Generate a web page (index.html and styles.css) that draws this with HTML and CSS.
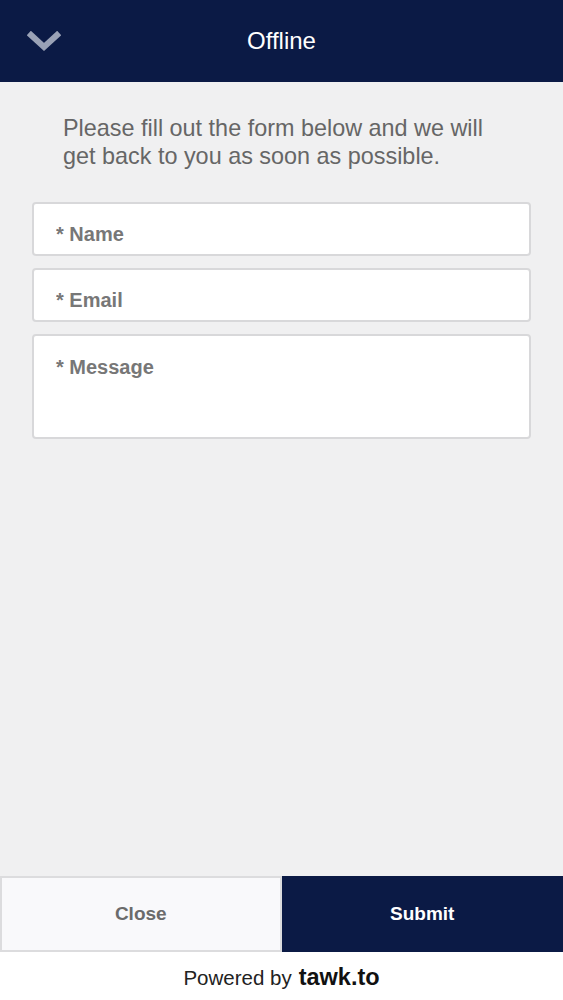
FILE: index.html
```html
<!DOCTYPE html>
<html lang="en">
<head>
  <meta charset="UTF-8" />
  <title>Offline</title>
  <link rel="stylesheet" href="styles.css">
</head>
<body>
  <div class="widget">
    <header>
      <button class="minimize" aria-label="Minimize">
        <svg width="34" height="22" viewBox="0 0 34 22"><path d="M4 4 L17 16 L30 4" fill="none" stroke="#9aa2b6" stroke-width="6" stroke-linecap="square"/></svg>
      </button>
      <h1>Offline</h1>
    </header>

    <main class="content">
      <p class="intro">Please fill out the form below and we will get back to you as soon as possible.</p>
      <form class="form">
        <input type="text" placeholder="* Name" />
        <input type="email" placeholder="* Email" />
        <textarea placeholder="* Message"></textarea>
      </form>
    </main>

    <div class="actions">
      <button class="close">Close</button>
      <button class="submit">Submit</button>
    </div>

    <footer>Powered by <strong>tawk.to</strong></footer>
  </div>
</body>
</html>
```

FILE: styles.css
```css
body {
  font-family: 'Liberation Sans', Arial, sans-serif;
  margin: 0;
  background: #f0f0f1;
}
.widget {
  display: flex;
  flex-direction: column;
  height: 100vh;
}
header {
  background: #0b1a45;
  height: 82px;
  display: flex;
  align-items: center;
  justify-content: center;
  position: relative;
}
header h1 {
  margin: 0;
  color: white;
  font-size: 24px;
  font-weight: normal;
}
.minimize {
  position: absolute;
  left: 27px;
  top: 31px;
  background: none;
  border: none;
  padding: 0;
  line-height: 0;
}
.content {
  flex: 1;
  padding: 0 32px;
}
.intro {
  margin: 32px 0 32px 31px;
  max-width: 440px;
  font-size: 23.4px;
  line-height: 28px;
  color: #666;
}
.form {
  display: flex;
  flex-direction: column;
  gap: 12px;
}
.form input,
.form textarea {
  box-sizing: border-box;
  width: 100%;
  border: 2px solid #d8d8da;
  border-radius: 4px;
  background: white;
  font-family: inherit;
  font-size: 20px;
  font-weight: bold;
  padding: 10px 22px 0;
  color: #555;
}
.form input {
  height: 54px;
}
.form textarea {
  height: 105px;
  padding-top: 20px;
  resize: none;
}
.form ::placeholder {
  color: #777;
}
.actions {
  display: flex;
  height: 76px;
}
.actions button {
  flex: 1;
  font-family: inherit;
  font-size: 19px;
  font-weight: bold;
  cursor: pointer;
}
.close {
  background: #f9f9fb;
  color: #6b6b6b;
  border: 2px solid #dcdcde;
}
.submit {
  background: #0b1a45;
  color: white;
  border: 2px solid #0b1a45;
}
footer {
  background: white;
  height: 48px;
  display: flex;
  align-items: center;
  justify-content: center;
  font-size: 20.5px;
  color: #222;
  gap: 7px;
  padding-top: 3px;
  box-sizing: border-box;
}
footer strong {
  font-size: 23.5px;
  color: #111;
}
```
